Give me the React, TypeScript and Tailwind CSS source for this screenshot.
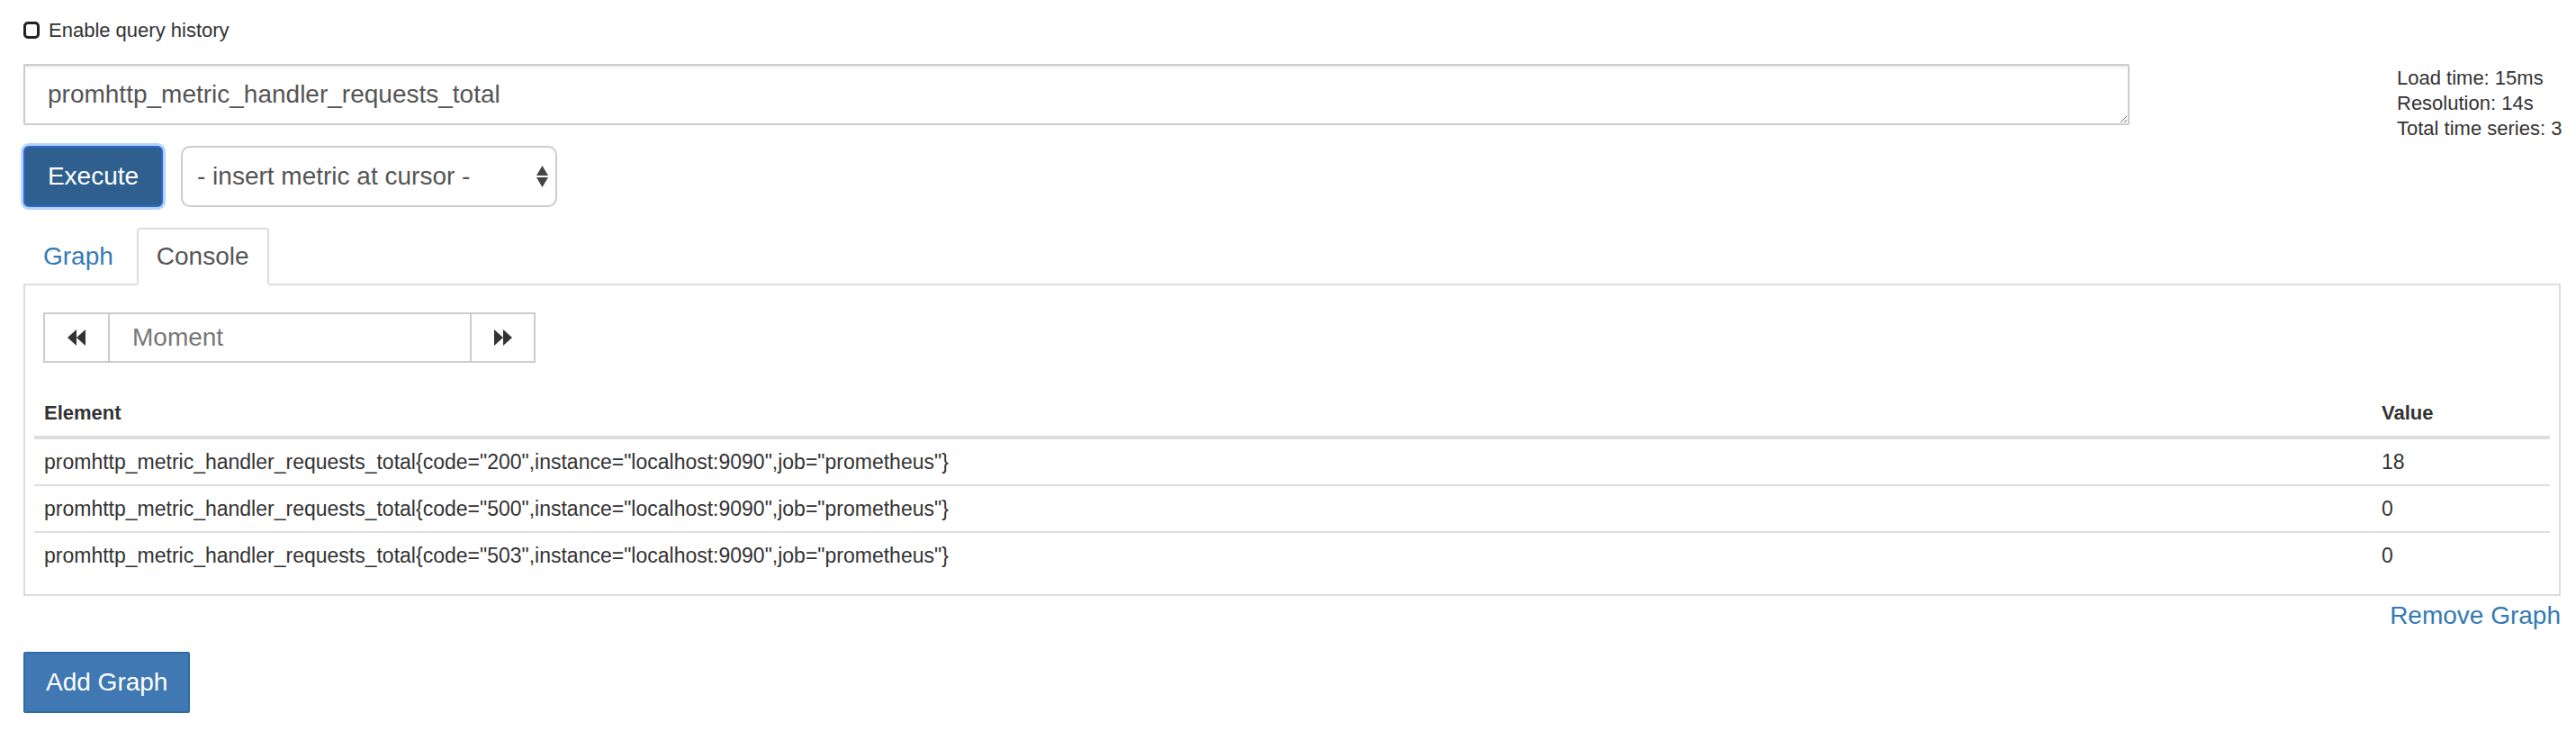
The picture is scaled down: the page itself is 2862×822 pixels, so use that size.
const rows = [
  { code: "200", value: "18" },
  { code: "500", value: "0" },
  { code: "503", value: "0" },
];

const Backward = () => (
  <svg width="20" height="18" viewBox="0 0 20 18" fill="#333">
    <polygon points="10,0 0,9 10,18" />
    <polygon points="20,0 10,9 20,18" />
  </svg>
);

const Forward = () => (
  <svg width="20" height="18" viewBox="0 0 20 18" fill="#333">
    <polygon points="0,0 10,9 0,18" />
    <polygon points="10,0 20,9 10,18" />
  </svg>
);

const App = () => {
  return (
    <div
      className="min-h-screen bg-white pl-[26px] pr-[17px] pt-[19px] text-[#333]"
      style={{ fontFamily: '"Liberation Sans", Arial, sans-serif' }}
    >
      <label className="flex h-[28px] items-center gap-[10px] text-[22px]">
        <span className="block h-[19px] w-[18px] rounded-[5px] border-[3px] border-[#222]" />
        Enable query history
      </label>

      <div className="mt-[24px] flex">
        <div className="w-[2340px] shrink-0">
          <textarea
            className="block h-[68px] w-full resize-y rounded-[2px] border-2 border-[#ccc] px-[25px] py-[12px] text-[28px] leading-[40px] text-[#555] shadow-[inset_0_2px_2px_rgba(0,0,0,0.075)] outline-none"
            defaultValue="promhttp_metric_handler_requests_total"
            spellCheck={false}
          />
          <div className="mt-[23px] flex gap-[20px]">
            <button className="h-[68px] w-[155px] rounded-[6px] border-2 border-[#2b67d1] bg-[#2f5f8f] text-[28px] text-white shadow-[0_0_0_3px_rgba(94,158,240,0.45)]">
              Execute
            </button>
            <div className="flex h-[68px] w-[418px] items-center justify-between rounded-[10px] border-2 border-[#ccc] bg-white pl-[16px] pr-[8px] text-[28px] text-[#555]">
              <span>- insert metric at cursor -</span>
              <svg width="13" height="24" viewBox="0 0 13 24" fill="#444">
                <polygon points="6.5,0 13,11 0,11" />
                <polygon points="0,13 13,13 6.5,24" />
              </svg>
            </div>
          </div>
        </div>
        <div className="ml-[297px] shrink-0 whitespace-nowrap pt-[2px] text-[22px] leading-[28px]">
          <div>Load time: 15ms</div>
          <div>Resolution: 14s</div>
          <div>Total time series: 3</div>
        </div>
      </div>

      <div className="mt-[23px] flex border-b-2 border-[#ddd] text-[28px] leading-[40px]">
        <div className="-mb-[2px] mr-[4px] border-2 border-transparent px-[20px] py-[10px] text-[#337ab7]">
          Graph
        </div>
        <div className="-mb-[2px] rounded-t-[4px] border-2 border-[#ddd] border-b-white bg-white px-[20px] py-[10px] text-[#555]">
          Console
        </div>
      </div>

      <div className="border-2 border-t-0 border-[#ddd] px-[10px] pb-[18px] pt-[30px]">
        <div className="ml-[10px] flex h-[56px] w-[547px] text-[28px]">
          <button className="flex w-[74px] items-center justify-center border-2 border-[#ccc] bg-white">
            <Backward />
          </button>
          <div className="flex w-[400px] items-center border-y-2 border-[#ccc] pl-[25px] text-[#777]">
            Moment
          </div>
          <button className="flex w-[73px] items-center justify-center border-2 border-[#ccc] bg-white">
            <Forward />
          </button>
        </div>

        <table className="mt-[31px] w-full text-left text-[23px] leading-[30px]">
          <thead>
            <tr className="border-b-4 border-[#ddd] text-[22px]">
              <th className="px-[11px] py-[10px] font-bold">Element</th>
              <th className="w-[198px] px-[11px] py-[10px] font-bold">Value</th>
            </tr>
          </thead>
          <tbody>
            {rows.map((row, index) => (
              <tr key={row.code} className={index > 0 ? "border-t-2 border-[#ddd]" : ""}>
                <td className="px-[11px] py-[10px]">
                  promhttp_metric_handler_requests_total{"{"}code="{row.code}",instance="localhost:9090",job="prometheus"{"}"}
                </td>
                <td className="px-[11px] py-[10px]">{row.value}</td>
              </tr>
            ))}
          </tbody>
        </table>
      </div>

      <div className="mt-[2px] text-right text-[28px] leading-[40px] text-[#337ab7]">Remove Graph</div>

      <button className="mt-[20px] h-[68px] rounded-[2px] border-2 border-[#2e6da4] bg-[#3f78b2] px-[23px] text-[28px] text-white">
        Add Graph
      </button>
    </div>
  );
};

export default App;
